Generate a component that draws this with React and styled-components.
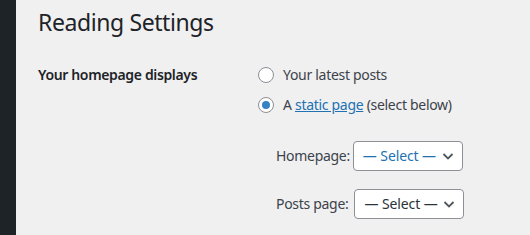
import styled, { createGlobalStyle } from 'styled-components'

const Global = createGlobalStyle`
  html, body {
    margin: 0;
    padding: 0;
    background: #f0f0f1;
  }
  body {
    font-family: "Noto Sans", "Open Sans", sans-serif;
    font-size: 14px;
    letter-spacing: -0.3px;
    color: #3c434a;
  }
`

const Layout = styled.div`
  display: flex;
  height: 235px;
  overflow: hidden;
`

const Sidebar = styled.div`
  width: 16px;
  flex-shrink: 0;
  background: #1d2327;
`

const Wrap = styled.div`
  flex: 1;
  padding: 8px 0 0 22px;
`

const Title = styled.h1`
  margin: 0;
  font-size: 23px;
  font-weight: 400;
  line-height: 1.3;
  letter-spacing: -0.4px;
  color: #1d2327;
`

const Row = styled.div`
  display: flex;
  margin-top: 22px;
`

const Th = styled.div`
  width: 220px;
  flex-shrink: 0;
  font-weight: 600;
  letter-spacing: -0.35px;
  color: #1d2327;
  line-height: 20px;
  padding-top: 5px;
`

const Td = styled.div`
  display: flex;
  flex-direction: column;
`

const RadioLabel = styled.label`
  display: flex;
  align-items: center;
  gap: 9px;
  height: 30px;
  line-height: 20px;
`

const Radio = styled.span`
  width: 16px;
  height: 16px;
  box-sizing: border-box;
  border-radius: 50%;
  border: 1px solid #8c8f94;
  background: #fff;
  display: flex;
  align-items: center;
  justify-content: center;
  &::after {
    content: '';
    width: 8px;
    height: 8px;
    border-radius: 50%;
    background: #3582c4;
    display: ${p => (p.checked ? 'block' : 'none')};
  }
`

const Link = styled.a`
  color: #2271b1;
  text-decoration: underline;
`

const PageList = styled.div`
  display: flex;
  flex-direction: column;
  gap: 18px;
  margin: 21px 0 0 18px;
`

const SelectRow = styled.label`
  display: flex;
  align-items: center;
  gap: ${p => p.gap || 4}px;
`

const Select = styled.div`
  width: 110px;
  height: 30px;
  box-sizing: border-box;
  border: 1px solid #8c8f94;
  border-radius: 4px;
  background: #fff;
  display: flex;
  align-items: center;
  justify-content: space-between;
  padding: 0 8px 0 9px;
  letter-spacing: -0.1px;
  color: ${p => (p.active ? '#2271b1' : '#2c3338')};
`

const Chevron = () => (
  <svg width="12" height="12" viewBox="0 0 12 12">
    <path d="M1.5 4 L6 8.5 L10.5 4" fill="none" stroke="#50575e" strokeWidth="1.8" />
  </svg>
)

export default function App() {
  return (
    <Layout>
      <Global />
      <Sidebar />
      <Wrap>
        <Title>Reading Settings</Title>
        <Row>
          <Th>Your homepage displays</Th>
          <Td>
            <RadioLabel>
              <Radio />
              Your latest posts
            </RadioLabel>
            <RadioLabel>
              <Radio checked />
              <span>
                A <Link href="#">static page</Link> (select below)
              </span>
            </RadioLabel>
            <PageList>
              <SelectRow gap={3}>
                Homepage:
                <Select active>
                  — Select —
                  <Chevron />
                </Select>
              </SelectRow>
              <SelectRow gap={6}>
                Posts page:
                <Select>
                  — Select —
                  <Chevron />
                </Select>
              </SelectRow>
            </PageList>
          </Td>
        </Row>
      </Wrap>
    </Layout>
  )
}
